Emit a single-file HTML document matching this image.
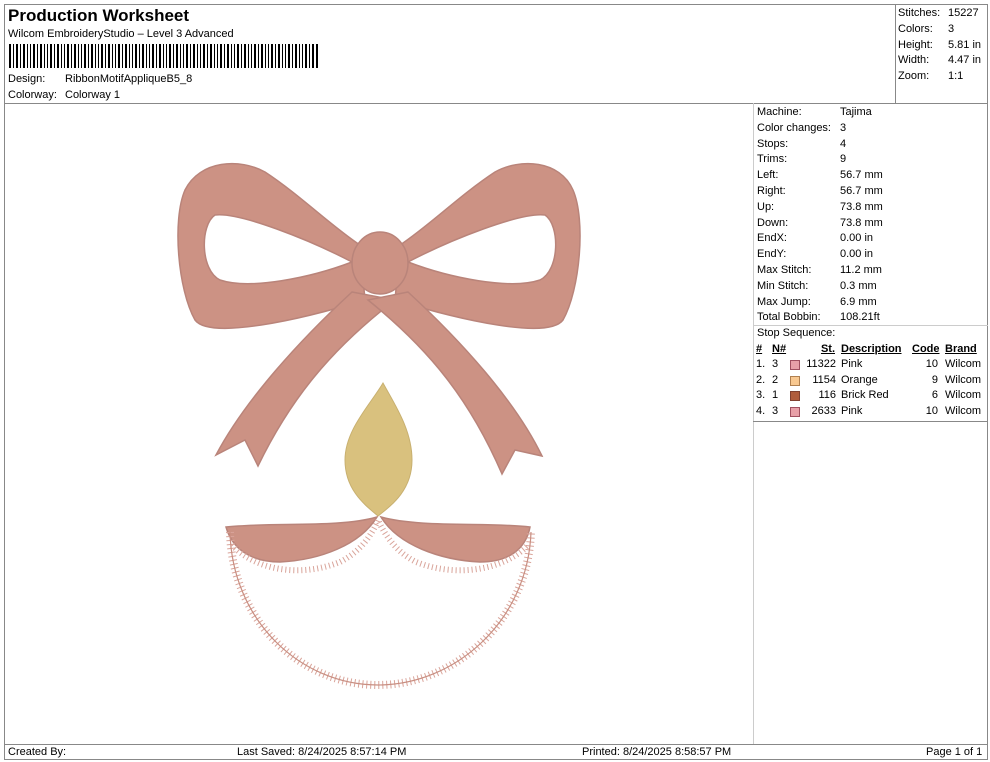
<!DOCTYPE html>
<html><head><style>
*{margin:0;padding:0;box-sizing:border-box}
body{width:990px;height:762px;background:#fff;font-family:"Liberation Sans",Arial,sans-serif;color:#000;position:relative;overflow:hidden;font-size:11px}
.a{position:absolute}
.ln{position:absolute;background:#888}
.t{position:absolute;white-space:nowrap;font-size:11px}
</style></head><body>
<div class="ln" style="left:4px;top:4px;width:984px;height:1px"></div>
<div class="ln" style="left:4px;top:4px;width:1px;height:756px"></div>
<div class="ln" style="left:987px;top:4px;width:1px;height:756px"></div>
<div class="ln" style="left:4px;top:103px;width:984px;height:1px"></div>
<div class="ln" style="left:895px;top:4px;width:1px;height:99px"></div>
<div class="ln" style="left:753px;top:103px;width:1px;height:641px;background:#ccc"></div>
<div class="ln" style="left:753px;top:421px;width:235px;height:1px"></div>
<div class="ln" style="left:753px;top:325px;width:235px;height:1px;background:#ccc"></div>
<div class="ln" style="left:4px;top:744px;width:984px;height:1px"></div>
<div class="ln" style="left:4px;top:759px;width:984px;height:1px"></div>

<div class="t" style="left:8px;top:6px;font-size:17px;font-weight:bold">Production Worksheet</div>
<div class="t" style="left:8px;top:28px">Wilcom EmbroideryStudio – Level 3 Advanced</div>
<svg class="a" style="left:9px;top:44px" width="310" height="24">
<g fill="#000" id="bc"></g>
<path d="M0 0h2v24H0zM4 0h1v24H4zM7 0h2v24H7zM11 0h1v24h-1zM14 0h2v24h-2zM18 0h1v24h-1zM21 0h1v24h-1zM24 0h2v24h-2zM28 0h1v24h-1zM31 0h2v24h-2zM35 0h1v24h-1zM38 0h1v24h-1zM41 0h2v24h-2zM45 0h1v24h-1zM48 0h2v24h-2zM52 0h1v24h-1zM55 0h1v24h-1zM58 0h2v24h-2zM62 0h1v24h-1zM65 0h2v24h-2zM69 0h1v24h-1zM72 0h1v24h-1zM75 0h2v24h-2zM79 0h1v24h-1zM82 0h2v24h-2zM86 0h1v24h-1zM89 0h1v24h-1zM92 0h2v24h-2zM96 0h1v24h-1zM99 0h2v24h-2zM103 0h1v24h-1zM106 0h1v24h-1zM109 0h2v24h-2zM113 0h1v24h-1zM116 0h2v24h-2zM120 0h1v24h-1zM123 0h1v24h-1zM126 0h2v24h-2zM130 0h1v24h-1zM133 0h2v24h-2zM137 0h1v24h-1zM140 0h1v24h-1zM143 0h2v24h-2zM147 0h1v24h-1zM150 0h2v24h-2zM154 0h1v24h-1zM157 0h1v24h-1zM160 0h2v24h-2zM164 0h1v24h-1zM167 0h2v24h-2zM171 0h1v24h-1zM174 0h1v24h-1zM177 0h2v24h-2zM181 0h1v24h-1zM184 0h2v24h-2zM188 0h1v24h-1zM191 0h1v24h-1zM194 0h2v24h-2zM198 0h1v24h-1zM201 0h2v24h-2zM205 0h1v24h-1zM208 0h1v24h-1zM211 0h2v24h-2zM215 0h1v24h-1zM218 0h2v24h-2zM222 0h1v24h-1zM225 0h1v24h-1zM228 0h2v24h-2zM232 0h1v24h-1zM235 0h2v24h-2zM239 0h1v24h-1zM242 0h1v24h-1zM245 0h2v24h-2zM249 0h1v24h-1zM252 0h2v24h-2zM256 0h1v24h-1zM259 0h1v24h-1zM262 0h2v24h-2zM266 0h1v24h-1zM269 0h2v24h-2zM273 0h1v24h-1zM276 0h1v24h-1zM279 0h2v24h-2zM283 0h1v24h-1zM286 0h2v24h-2zM290 0h1v24h-1zM293 0h1v24h-1zM296 0h2v24h-2zM300 0h1v24h-1zM303 0h2v24h-2zM307 0h2v24h-2z"/>
</svg>
<div class="t" style="left:8px;top:73px">Design:</div><div class="t" style="left:65px;top:73px">RibbonMotifAppliqueB5_8</div>
<div class="t" style="left:8px;top:89px">Colorway:</div><div class="t" style="left:65px;top:89px">Colorway 1</div>

<div class="t" style="left:898px;top:6px;line-height:15.8px">Stitches:<br>Colors:<br>Height:<br>Width:<br>Zoom:</div>
<div class="t" style="left:948px;top:6px;line-height:15.8px">15227<br>3<br>5.81 in<br>4.47 in<br>1:1</div>

<div class="t" style="left:757px;top:105px;line-height:15.8px">Machine:<br>Color changes:<br>Stops:<br>Trims:<br>Left:<br>Right:<br>Up:<br>Down:<br>EndX:<br>EndY:<br>Max Stitch:<br>Min Stitch:<br>Max Jump:<br>Total Bobbin:<br>Stop Sequence:</div>
<div class="t" style="left:840px;top:105px;line-height:15.8px">Tajima<br>3<br>4<br>9<br>56.7 mm<br>56.7 mm<br>73.8 mm<br>73.8 mm<br>0.00 in<br>0.00 in<br>11.2 mm<br>0.3 mm<br>6.9 mm<br>108.21ft</div>
<div style="position:absolute;left:756px;top:342px;font-size:11px;line-height:15.6px">
<div style="font-weight:bold;position:relative;height:15.6px"><span class="a" style="left:0;text-decoration:underline">#</span><span class="a" style="left:16px;text-decoration:underline">N#</span><span class="a" style="right:-79px;text-decoration:underline">St.</span><span class="a" style="left:85px;text-decoration:underline">Description</span><span class="a" style="left:156px;text-decoration:underline">Code</span><span class="a" style="left:189px;text-decoration:underline">Brand</span></div>
</div>
<div style="position:absolute;left:756px;top:357px;width:230px;font-size:11px;line-height:15.6px">
<div style="position:relative;height:15.6px"><span class="a">1.</span><span class="a" style="left:16px">3</span><span class="a" style="left:34px;top:3px;width:10px;height:10px;background:#e8a0a8;border:1px solid #a05060"></span><span class="a" style="right:150px">11322</span><span class="a" style="left:85px">Pink</span><span class="a" style="right:48px">10</span><span class="a" style="left:189px">Wilcom</span></div>
<div style="position:relative;height:15.6px"><span class="a">2.</span><span class="a" style="left:16px">2</span><span class="a" style="left:34px;top:3px;width:10px;height:10px;background:#f8c890;border:1px solid #b08050"></span><span class="a" style="right:150px">1154</span><span class="a" style="left:85px">Orange</span><span class="a" style="right:48px">9</span><span class="a" style="left:189px">Wilcom</span></div>
<div style="position:relative;height:15.6px"><span class="a">3.</span><span class="a" style="left:16px">1</span><span class="a" style="left:34px;top:3px;width:10px;height:10px;background:#b05c3c;border:1px solid #804030"></span><span class="a" style="right:150px">116</span><span class="a" style="left:85px">Brick Red</span><span class="a" style="right:48px">6</span><span class="a" style="left:189px">Wilcom</span></div>
<div style="position:relative;height:15.6px"><span class="a">4.</span><span class="a" style="left:16px">3</span><span class="a" style="left:34px;top:3px;width:10px;height:10px;background:#e8a0a8;border:1px solid #a05060"></span><span class="a" style="right:150px">2633</span><span class="a" style="left:85px">Pink</span><span class="a" style="right:48px">10</span><span class="a" style="left:189px">Wilcom</span></div>
</div>

<svg class="a" style="left:0;top:0" width="753" height="744">
<g fill="#cc9284" stroke="#b9847a" stroke-width="1.5">
<path fill-rule="evenodd" d="M360 245 C330 225 300 195 265 172 C240 158 200 160 185 190 C172 220 178 290 195 320 C210 340 300 320 365 300 Z M215 215 C240 212 310 240 352 262 C310 278 250 290 220 280 C200 270 200 225 215 215 Z"/>
<path fill-rule="evenodd" d="M400 245 C430 225 460 195 495 172 C520 158 560 160 573 190 C586 220 580 290 563 320 C548 340 460 320 395 300 Z M545 215 C520 212 450 240 408 262 C450 278 510 290 540 280 C560 270 560 225 545 215 Z"/>
<path d="M352 292 L395 300 C330 350 290 400 258 466 L245 440 L216 455 C245 400 300 340 352 292 Z"/>
<path d="M408 292 L368 300 C430 350 470 400 502 474 L515 450 L542 456 C515 400 460 340 408 292 Z"/>
<ellipse cx="380" cy="263" rx="28" ry="31"/>
<path d="M226 527 C270 522 340 528 377 517 C360 545 320 560 280 562 C250 562 232 548 226 527 Z"/>
<path d="M530 527 C490 522 420 528 381 517 C398 545 440 560 480 562 C510 562 526 548 530 527 Z"/>
</g>
<path d="M383 383 C370 405 345 430 345 460 C345 490 365 505 378 516 C392 505 412 490 412 460 C412 430 395 405 383 383 Z" fill="#d9c17e" stroke="#c8b070"/>
<path d="M230 532 C232 620 300 685 378 685 C456 685 528 620 531 532" fill="none" stroke="#d9a49a" stroke-width="8" stroke-dasharray="1 3"/>
<path d="M230 532 C232 620 300 685 378 685 C456 685 528 620 531 532" fill="none" stroke="#c98f82" stroke-width="1.2"/>
<path d="M232 545 C255 570 300 578 340 562 C360 552 372 535 378 520 C385 535 396 552 416 562 C456 578 505 570 528 545" fill="none" stroke="#d9a49a" stroke-width="6" stroke-dasharray="1 3"/>
</svg>

<div class="t" style="left:8px;top:746px;font-size:11px">Created By:</div>
<div class="t" style="left:237px;top:746px">Last Saved: 8/24/2025 8:57:14 PM</div>
<div class="t" style="left:582px;top:746px">Printed: 8/24/2025 8:58:57 PM</div>
<div class="t" style="left:926px;top:746px">Page 1 of 1</div>
</body></html>
